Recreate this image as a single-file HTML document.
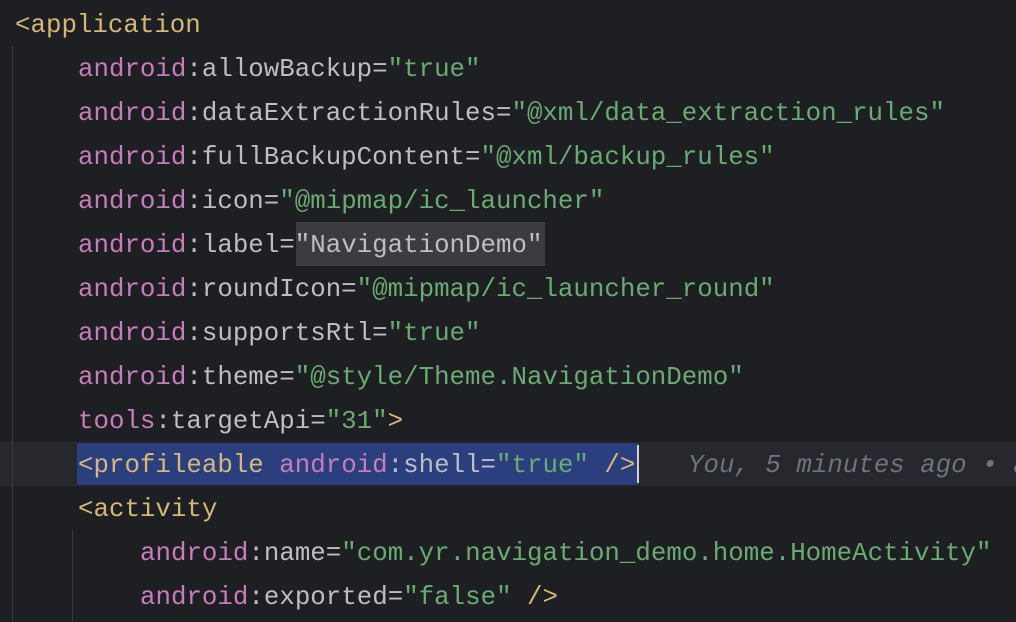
<!DOCTYPE html>
<html><head><style>
body{margin:0;background:#1e1f22;width:1016px;height:622px;overflow:hidden;position:relative;font-family:"Liberation Mono",monospace;font-size:25.8px;}
.l{position:absolute;left:0;height:44px;line-height:44px;margin-top:2px;white-space:pre;color:#bcbec4;}
.t{color:#d5b778}.a{color:#c77dbb}.s{color:#6aab73}
.cur{position:absolute;left:0;width:1016px;top:442px;height:44px;background:#26282e}
.sel{position:absolute;left:77px;width:561px;top:443px;height:42px;background:#2b3f7e}
.lab{position:absolute;left:296px;width:249px;top:222px;height:44px;background:#3a3c40}
.g{position:absolute;width:1px;background:#393b40}
.c{position:absolute;left:637px;top:445px;width:2px;height:38px;background:#ced0d6}
.cm{color:#6f737a;font-style:italic}
</style></head><body>
<div class="cur"></div><div class="sel"></div><div class="lab"></div>
<div class="g" style="left:12px;top:46px;height:576px"></div>
<div class="g" style="left:72px;top:530px;height:92px"></div>
<div class="c"></div>
<div class="l" style="top:2px;left:15px"><span class="t">&lt;application</span></div>
<div class="l" style="top:46px;left:78px"><span class="a">android</span>:allowBackup=<span class="s">"true"</span></div>
<div class="l" style="top:90px;left:78px"><span class="a">android</span>:dataExtractionRules=<span class="s">"@xml/data_extraction_rules"</span></div>
<div class="l" style="top:134px;left:78px"><span class="a">android</span>:fullBackupContent=<span class="s">"@xml/backup_rules"</span></div>
<div class="l" style="top:178px;left:78px"><span class="a">android</span>:icon=<span class="s">"@mipmap/ic_launcher"</span></div>
<div class="l" style="top:222px;left:78px"><span class="a">android</span>:label=<span style="color:#bcbec4">"NavigationDemo"</span></div>
<div class="l" style="top:266px;left:78px"><span class="a">android</span>:roundIcon=<span class="s">"@mipmap/ic_launcher_round"</span></div>
<div class="l" style="top:310px;left:78px"><span class="a">android</span>:supportsRtl=<span class="s">"true"</span></div>
<div class="l" style="top:354px;left:78px"><span class="a">android</span>:theme=<span class="s">"@style/Theme.NavigationDemo"</span></div>
<div class="l" style="top:398px;left:78px"><span class="a">tools</span>:targetApi=<span class="s">"31"</span><span class="t">&gt;</span></div>
<div class="l" style="top:442px;left:78px"><span class="t">&lt;profileable</span> <span class="a">android</span>:shell=<span class="s">"true"</span> <span class="t">/&gt;</span></div>
<div class="l cm" style="top:442px;left:688px">You, 5 minutes ago • a</div>
<div class="l" style="top:486px;left:78px"><span class="t">&lt;activity</span></div>
<div class="l" style="top:530px;left:140px"><span class="a">android</span>:name=<span class="s">"com.yr.navigation_demo.home.HomeActivity"</span></div>
<div class="l" style="top:574px;left:140px"><span class="a">android</span>:exported=<span class="s">"false"</span> <span class="t">/&gt;</span></div>
</body></html>
